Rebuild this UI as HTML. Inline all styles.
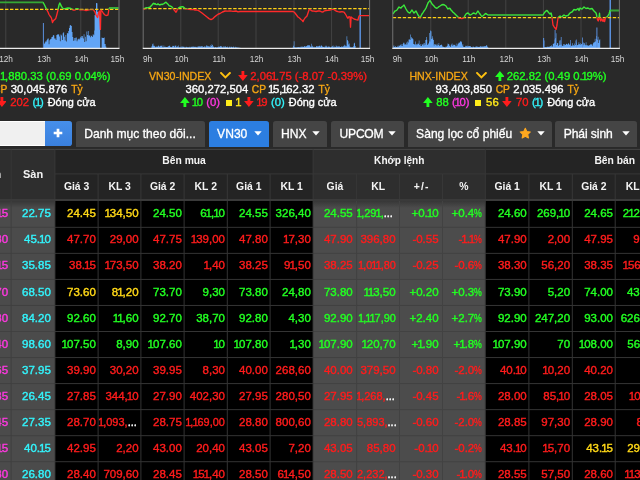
<!DOCTYPE html>
<html><head><meta charset="utf-8"><title>Bang gia</title>
<style>
*{box-sizing:border-box;margin:0;padding:0}
html,body{width:640px;height:480px;overflow:hidden;background:#292929;font-family:"Liberation Sans",sans-serif;color:#fff}
#root{position:relative;width:640px;height:480px;overflow:hidden;background:#292929}
#lay{position:absolute;left:0;top:0;width:640px;height:480px;will-change:transform}
.ax{position:absolute;top:53px;width:30px;text-align:center;font-size:8.3px;line-height:12px;color:#d6d6d6;letter-spacing:-0.1px}
.ix{position:absolute;top:68.6px;width:300px;text-align:center;font-size:11.3px;white-space:nowrap;color:#fff;-webkit-text-stroke:0.35px currentColor}
.ix .nm{font-size:10.6px;-webkit-text-stroke:0.3px currentColor}
.ix .lb{font-size:10.2px;color:#f7a714}
.ix .l1{height:14px;line-height:14px}
.ix .l2{height:13.6px;line-height:13.6px;margin-top:0.6px}
.ix .l3{height:13.6px;line-height:13.6px;margin-top:-0.4px}
.ix span{-webkit-text-stroke:0.35px currentColor}
.ar{display:inline-block;vertical-align:-1px;margin:0}
.chv{display:inline-block;vertical-align:0.9px;margin:0 7.4px 0 8.6px}
.sq{display:inline-block;width:6px;height:6px;background:#ffee1a;vertical-align:0.2px;margin:0 5px 0 5.5px}
.inp{position:absolute;left:-10px;top:120.6px;width:54.8px;height:25.4px;background:#f0f0f0;border-top:1px solid #fff;border-bottom:1px solid #fff}
.plus{position:absolute;left:44.8px;top:120.6px;width:26.8px;height:25.4px;background:linear-gradient(#468fea,#3a80de);border-radius:0 2.8px 2.8px 0}
.plus svg{position:absolute;left:8.6px;top:7.2px}
.bt{position:absolute;top:120.8px;height:26.6px;background:#454545;border-radius:2.8px 2.8px 0 0;font-size:12.1px;line-height:25px;color:#fff;white-space:nowrap;-webkit-text-stroke:0.3px #fff}
.bt.bl{background:#2c7ee1}
.bt span{position:absolute;top:1px}
.bt i,.bt b{position:absolute;top:0;height:25px;font-style:normal}
.bt i svg{position:absolute;top:10.2px;left:0}
.bt b svg{position:absolute;top:6.2px;left:0}
#thead{position:absolute;left:0;top:149px;width:640px;height:52px;background:#2e2e2e}
.h{position:absolute;text-align:center;font-weight:bold;color:#f4f4f4;white-space:nowrap}
.h span{top:0px}
.h.r2 span{top:-0.1px}
.c{position:absolute;font-size:11.5px;line-height:26px;white-space:nowrap;overflow:hidden;-webkit-text-stroke:0.4px currentColor}
.c span{position:absolute;top:0px}
.c b{font-weight:normal;margin:0 -1px}
.ix b{font-weight:normal;margin:0 -1.3px}
.h u{text-decoration:none;letter-spacing:1.1px;margin-left:1px}
.bg{position:absolute;top:200.8px;height:280px}
.c i{font-style:normal;color:#fff}
.c s{text-decoration:none;display:inline-block;transform:scaleX(.76);transform-origin:0 50%;margin-right:-2.4px}
</style></head><body><div id="root"><div id="lay">
<svg width="640" height="68" viewBox="0 0 640 68" style="position:absolute;left:0;top:0">
<line x1="5.8" y1="0" x2="5.8" y2="48.0" stroke="#4a4a4a" stroke-width="0.8"/>
<line x1="80.8" y1="0" x2="80.8" y2="48.0" stroke="#4a4a4a" stroke-width="0.8"/>
<path d="M43.80 48.0V43.9H44.50V42.7H45.20V41.6H45.90V41.6H46.60V40.0H47.30V38.7H48.00V38.6H48.70V44.2H49.40V40.2H50.10V39.2H50.80V38.7H51.50V37.1H52.20V36.7H52.90V35.1H53.60V35.6H54.30V38.6H55.00V38.4H55.70V40.1H56.40V35.0H57.10V34.4H57.80V34.3H58.50V34.5H59.20V36.5H59.90V41.2H60.60V34.6H61.30V35.6H62.00V40.1H62.70V33.3H63.40V32.2H64.10V36.7H64.80V40.5H65.50V35.0H66.20V41.5H66.90V33.0H67.60V33.6H68.30V31.0H69.00V28.1H69.70V25.5H70.40V24.9H71.10V26.0H71.80V32.0H72.50V37.0H73.20V40.7H73.90V38.1H74.60V40.4H75.30V37.8H76.00V37.6H76.70V41.3H77.40V39.5H78.10V38.8H78.80V39.5H79.50V38.4H80.20V37.3H80.90V36.1H81.60V37.8H82.30V35.9H83.00V38.6H83.70V34.3H84.40V42.0H85.10V36.7H85.80V41.3H86.50V31.6H87.20V35.0H87.90V31.1H88.60V35.6H89.30V35.4H90.00V37.2H90.70V35.4H91.40V35.9H92.10V37.1H92.80V34.2H93.50V35.3H94.20V30.6H94.60V15.0H95.30V14.0H96.00V3.0H96.70V3.2H97.40V12.0H98.10V13.0H98.80V14.0H99.50V16.0H100.20V48.0ZM101.60 48.0V37.5H102.30V38.0H103.90V37.5H104.60V44.0H105.60V46.5H106.30V48.0Z" fill="#62a5f6"/>
<rect x="42.9" y="23" width="1.0" height="25.0" fill="#5a8fdc"/>
<line x1="0" y1="9.4" x2="119.0" y2="9.4" stroke="#ffd015" stroke-width="1.25" stroke-dasharray="3.4 1.6"/>
<clipPath id="up1"><rect x="-10" y="-5" width="660" height="14.4"/></clipPath>
<clipPath id="dn1"><rect x="-10" y="9.4" width="660" height="60"/></clipPath>
<polyline points="-5.0,2.4 43.0,2.4 44.0,4.0 45.0,6.0 46.5,9.4 48.0,12.0 49.0,14.5 50.0,16.0 51.0,17.2 51.6,18.6 52.5,22.5 53.4,20.6 54.2,20.0 55.0,19.4 55.8,18.4 57.0,14.0 58.0,10.0 59.0,5.0 59.8,3.0 60.6,4.6 61.4,6.4 62.5,8.0 64.0,9.0 66.0,8.5 68.0,8.0 70.0,8.2 72.0,9.3 73.0,10.0 75.0,10.0 76.0,8.8 78.0,8.8 80.0,9.8 84.0,9.8 86.0,10.5 88.0,10.0 90.0,9.6 93.0,9.6 94.0,10.6 95.0,12.0 96.0,15.0 97.5,17.5 98.5,13.0 99.4,11.0 99.9,18.0 100.4,29.4 100.7,18.0 100.9,10.0 102.0,11.0 103.0,12.6 104.0,14.0 105.0,15.0 106.0,15.5 107.0,15.4 108.0,15.0 108.5,12.0 108.9,9.0 109.5,8.0 118.6,8.0" fill="none" stroke="#3be83b" stroke-width="1.4" stroke-linejoin="round" clip-path="url(#up1)"/>
<polyline points="-5.0,2.4 43.0,2.4 44.0,4.0 45.0,6.0 46.5,9.4 48.0,12.0 49.0,14.5 50.0,16.0 51.0,17.2 51.6,18.6 52.5,22.5 53.4,20.6 54.2,20.0 55.0,19.4 55.8,18.4 57.0,14.0 58.0,10.0 59.0,5.0 59.8,3.0 60.6,4.6 61.4,6.4 62.5,8.0 64.0,9.0 66.0,8.5 68.0,8.0 70.0,8.2 72.0,9.3 73.0,10.0 75.0,10.0 76.0,8.8 78.0,8.8 80.0,9.8 84.0,9.8 86.0,10.5 88.0,10.0 90.0,9.6 93.0,9.6 94.0,10.6 95.0,12.0 96.0,15.0 97.5,17.5 98.5,13.0 99.4,11.0 99.9,18.0 100.4,29.4 100.7,18.0 100.9,10.0 102.0,11.0 103.0,12.6 104.0,14.0 105.0,15.0 106.0,15.5 107.0,15.4 108.0,15.0 108.5,12.0 108.9,9.0 109.5,8.0 118.6,8.0" fill="none" stroke="#ff2a2a" stroke-width="1.35" stroke-linejoin="round" clip-path="url(#dn1)"/>
<line x1="-5" y1="2.4" x2="43" y2="2.4" stroke="#35a835" stroke-width="1.45"/>
<line x1="109" y1="8" x2="118.6" y2="8" stroke="#3fae3f" stroke-width="1.45"/>
<line x1="119.0" y1="0" x2="119.0" y2="48.0" stroke="#727272" stroke-width="1"/>
<line x1="-2" y1="48.3" x2="119.5" y2="48.3" stroke="#ececec" stroke-width="1.2"/>
<line x1="180.8" y1="0" x2="180.8" y2="48.0" stroke="#4a4a4a" stroke-width="0.8"/>
<line x1="218.2" y1="0" x2="218.2" y2="48.0" stroke="#4a4a4a" stroke-width="0.8"/>
<line x1="256" y1="0" x2="256" y2="48.0" stroke="#4a4a4a" stroke-width="0.8"/>
<line x1="294" y1="0" x2="294" y2="48.0" stroke="#4a4a4a" stroke-width="0.8"/>
<line x1="331.6" y1="0" x2="331.6" y2="48.0" stroke="#4a4a4a" stroke-width="0.8"/>
<path d="M151.00 48.0V47.7H151.60V46.1H152.20V44.3H152.80V43.4H153.40V45.8H154.00V45.7H154.60V46.3H155.20V47.2H155.80V46.7H156.40V46.6H157.00V47.0H157.60V45.9H158.20V45.6H158.80V46.2H159.40V46.7H160.00V45.8H160.60V46.3H161.20V45.8H161.80V45.5H162.40V47.3H163.00V47.2H163.60V45.4H164.20V47.1H164.80V46.6H165.40V47.1H166.00V47.0H166.60V47.1H167.20V47.1H167.80V46.2H168.40V46.2H169.00V45.7H169.60V45.7H170.20V47.1H170.80V47.1H171.40V47.3H172.00V46.4H172.60V45.8H173.20V46.1H173.80V45.8H174.40V47.2H175.00V45.8H175.60V45.5H176.20V47.3H176.80V46.4H177.40V46.6H178.00V45.6H178.60V47.2H179.20V47.2H179.80V47.4H180.40V46.8H181.00V46.6H181.60V47.4H182.20V46.5H182.80V46.7H183.40V46.8H184.00V47.4H184.60V46.7H185.20V47.4H185.80V47.2H186.40V46.8H187.00V47.3H187.60V47.2H188.20V47.2H188.80V47.4H189.40V46.8H190.00V47.5H190.60V46.8H191.20V47.0H191.80V46.3H192.40V46.9H193.00V46.8H193.60V46.4H194.20V47.1H194.80V46.5H195.40V46.9H196.00V47.3H196.60V46.7H197.20V47.3H197.80V46.1H198.40V46.8H199.00V45.9H199.60V47.0H200.20V46.4H200.80V46.0H201.40V46.4H202.00V46.0H202.60V47.3H203.20V46.9H203.80V46.6H204.40V46.4H205.00V47.3H205.60V46.2H206.20V45.3H206.80V46.6H207.40V45.7H208.00V46.4H208.60V46.0H209.20V46.4H209.80V47.1H210.40V45.3H211.00V46.0H211.60V44.2H212.20V45.1H212.80V46.7H213.40V46.5H214.00V47.4H214.60V47.3H215.20V46.9H215.80V47.3H216.40V47.4H217.00V47.2H217.60V47.3H218.20V46.6H218.80V46.9H219.40V46.5H220.00V45.9H220.60V46.6H221.20V46.2H221.80V46.7H222.40V47.4H223.00V47.2H223.60V45.9H224.20V47.3H224.80V46.6H225.40V46.6H226.00V47.2H226.60V46.9H227.20V46.4H227.80V47.4H228.40V47.4H229.00V46.4H229.60V47.2H230.20V47.5H230.80V46.5H231.40V47.1H232.00V47.5H232.60V47.0H233.20V46.5H233.80V47.6H234.40V47.5H235.00V46.7H235.60V47.6H236.20V47.2H236.80V47.6H237.40V47.6H238.00V47.5H238.60V47.7H239.20V47.8H239.80V47.8H240.40V48.0ZM292.60 48.0V47.5H293.20V45.8H293.80V41.3H294.40V47.3H295.00V47.4H295.60V47.2H296.20V47.4H296.80V47.3H297.40V47.2H298.00V47.2H298.60V47.0H299.20V47.2H299.80V47.4H300.40V46.7H301.00V46.6H301.60V47.2H302.20V46.6H302.80V47.1H303.40V46.7H304.00V46.1H304.60V46.6H305.20V46.8H305.80V45.9H306.40V46.2H307.00V45.1H307.60V45.9H308.20V45.1H308.80V45.6H309.40V45.2H310.00V46.6H310.60V46.8H311.20V43.7H311.80V46.8H312.40V45.7H313.00V46.7H313.60V47.5H314.20V46.8H314.80V47.4H315.40V46.9H316.00V46.0H316.60V46.5H317.20V46.6H317.80V45.9H318.40V46.4H319.00V46.0H319.60V45.5H320.20V46.8H320.80V45.9H321.40V45.2H322.00V46.3H322.60V46.9H323.20V46.9H323.80V46.4H324.40V47.3H325.00V45.7H325.60V47.1H326.20V45.8H326.80V46.6H327.40V47.3H328.00V46.2H328.60V47.0H329.20V46.5H329.80V47.0H330.40V47.4H331.00V46.7H331.60V46.7H332.20V46.2H332.80V45.6H333.40V47.2H334.00V46.6H334.60V47.2H335.20V47.0H335.80V45.6H336.40V46.4H337.00V46.7H337.60V46.2H338.20V46.6H338.80V46.6H339.40V46.6H340.00V47.0H340.60V46.9H341.20V46.4H341.80V46.2H342.40V47.0H343.00V46.4H343.60V45.7H344.20V44.8H344.80V46.6H345.40V45.6H346.00V46.2H346.60V36.3H347.20V39.9H347.80V41.3H348.40V44.4H349.00V43.6H349.60V46.6H350.20V47.2H350.80V47.5H351.40V47.3H352.00V47.1H352.60V47.7H353.20V46.2H353.80V43.5H354.40V42.8H355.00V46.1H355.60V48.0Z" fill="#62a5f6"/>
<rect x="359.45" y="8.7" width="1.5" height="39.3" fill="#5a8fdc"/>
<line x1="143.2" y1="8.7" x2="369.6" y2="8.7" stroke="#ffd015" stroke-width="1.25" stroke-dasharray="3.4 1.6"/>
<clipPath id="up2"><rect x="-10" y="-5" width="660" height="13.7"/></clipPath>
<clipPath id="dn2"><rect x="-10" y="8.7" width="660" height="60"/></clipPath>
<polyline points="143.4,9.8 144.2,9.2 145.0,8.2 146.5,7.6 148.0,8.0 149.0,7.2 150.0,7.4 151.0,6.0 152.0,5.0 153.0,3.8 153.6,3.2 154.4,4.0 155.0,3.4 156.0,4.4 157.0,4.6 158.0,3.8 158.6,4.4 160.0,5.0 161.0,4.2 162.0,4.6 163.0,4.0 164.0,3.6 165.0,2.8 166.0,2.2 167.0,3.4 168.0,4.2 169.0,5.6 170.0,6.0 171.0,6.4 172.0,7.0 173.0,8.4 173.8,9.6 175.0,11.0 176.0,12.2 176.8,10.8 177.4,9.2 178.2,8.4 179.0,7.6 180.0,7.0 181.0,7.2 182.0,6.6 183.0,6.8 184.0,7.6 185.0,8.6 186.5,8.9 188.0,9.0 190.5,9.6 193.0,9.4 195.0,10.0 197.0,10.0 199.5,11.2 202.0,13.0 204.5,15.0 207.0,17.0 209.0,18.6 211.0,19.6 213.0,18.6 215.0,16.6 217.0,15.0 218.5,14.0 220.0,13.5 222.5,12.0 225.0,11.0 227.5,11.2 230.0,10.8 233.0,11.3 236.0,11.0 238.0,11.8 240.0,11.5 293.0,11.5 294.0,12.0 295.0,13.0 296.5,15.0 298.0,17.0 299.5,18.0 301.0,19.5 302.0,20.2 303.0,21.6 304.0,19.5 305.0,18.0 306.0,17.0 307.0,16.0 308.0,13.0 309.0,10.0 310.0,9.0 311.0,10.4 312.0,11.0 314.0,11.2 316.0,11.5 318.0,11.0 320.0,11.0 321.5,11.8 323.0,12.0 324.5,10.8 326.0,10.5 328.0,10.4 330.0,10.0 331.5,9.6 333.0,9.0 334.5,10.0 336.0,11.0 338.0,11.6 340.0,12.0 342.0,11.7 344.0,12.2 345.0,13.5 346.0,15.0 347.0,17.0 348.0,18.2 349.0,16.5 350.0,17.0 350.5,27.2 351.1,17.0 352.5,18.0 354.0,19.0 356.0,19.6 358.0,20.0 358.7,17.0 359.4,15.6 369.0,15.6" fill="none" stroke="#3be83b" stroke-width="1.4" stroke-linejoin="round" clip-path="url(#up2)"/>
<polyline points="143.4,9.8 144.2,9.2 145.0,8.2 146.5,7.6 148.0,8.0 149.0,7.2 150.0,7.4 151.0,6.0 152.0,5.0 153.0,3.8 153.6,3.2 154.4,4.0 155.0,3.4 156.0,4.4 157.0,4.6 158.0,3.8 158.6,4.4 160.0,5.0 161.0,4.2 162.0,4.6 163.0,4.0 164.0,3.6 165.0,2.8 166.0,2.2 167.0,3.4 168.0,4.2 169.0,5.6 170.0,6.0 171.0,6.4 172.0,7.0 173.0,8.4 173.8,9.6 175.0,11.0 176.0,12.2 176.8,10.8 177.4,9.2 178.2,8.4 179.0,7.6 180.0,7.0 181.0,7.2 182.0,6.6 183.0,6.8 184.0,7.6 185.0,8.6 186.5,8.9 188.0,9.0 190.5,9.6 193.0,9.4 195.0,10.0 197.0,10.0 199.5,11.2 202.0,13.0 204.5,15.0 207.0,17.0 209.0,18.6 211.0,19.6 213.0,18.6 215.0,16.6 217.0,15.0 218.5,14.0 220.0,13.5 222.5,12.0 225.0,11.0 227.5,11.2 230.0,10.8 233.0,11.3 236.0,11.0 238.0,11.8 240.0,11.5 293.0,11.5 294.0,12.0 295.0,13.0 296.5,15.0 298.0,17.0 299.5,18.0 301.0,19.5 302.0,20.2 303.0,21.6 304.0,19.5 305.0,18.0 306.0,17.0 307.0,16.0 308.0,13.0 309.0,10.0 310.0,9.0 311.0,10.4 312.0,11.0 314.0,11.2 316.0,11.5 318.0,11.0 320.0,11.0 321.5,11.8 323.0,12.0 324.5,10.8 326.0,10.5 328.0,10.4 330.0,10.0 331.5,9.6 333.0,9.0 334.5,10.0 336.0,11.0 338.0,11.6 340.0,12.0 342.0,11.7 344.0,12.2 345.0,13.5 346.0,15.0 347.0,17.0 348.0,18.2 349.0,16.5 350.0,17.0 350.5,27.2 351.1,17.0 352.5,18.0 354.0,19.0 356.0,19.6 358.0,20.0 358.7,17.0 359.4,15.6 369.0,15.6" fill="none" stroke="#ff2a2a" stroke-width="1.35" stroke-linejoin="round" clip-path="url(#dn2)"/>
<line x1="143.2" y1="0" x2="143.2" y2="48.0" stroke="#727272" stroke-width="1"/>
<line x1="369.6" y1="0" x2="369.6" y2="48.0" stroke="#727272" stroke-width="1"/>
<line x1="142.7" y1="48.3" x2="370.1" y2="48.3" stroke="#ececec" stroke-width="1.2"/>
<line x1="430.8" y1="0" x2="430.8" y2="48.0" stroke="#4a4a4a" stroke-width="0.8"/>
<line x1="468.2" y1="0" x2="468.2" y2="48.0" stroke="#4a4a4a" stroke-width="0.8"/>
<line x1="505.8" y1="0" x2="505.8" y2="48.0" stroke="#4a4a4a" stroke-width="0.8"/>
<line x1="543.4" y1="0" x2="543.4" y2="48.0" stroke="#4a4a4a" stroke-width="0.8"/>
<line x1="581" y1="0" x2="581" y2="48.0" stroke="#4a4a4a" stroke-width="0.8"/>
<path d="M393.00 48.0V46.6H393.60V45.3H394.20V46.9H394.80V47.1H395.40V46.0H396.00V46.9H396.60V47.0H397.20V46.5H397.80V45.5H398.40V46.7H399.00V45.5H399.60V45.9H400.20V45.1H400.80V43.9H401.40V45.8H402.00V45.9H402.60V44.0H403.20V42.8H403.80V42.8H404.40V44.6H405.00V44.0H405.60V45.1H406.20V42.6H406.80V44.6H407.40V41.4H408.00V42.5H408.60V39.6H409.20V39.2H409.80V40.1H410.40V34.6H411.00V37.0H411.60V38.6H412.20V38.3H412.80V39.2H413.40V44.1H414.00V44.5H414.60V44.3H415.20V41.6H415.80V45.3H416.40V44.0H417.00V44.6H417.60V43.4H418.20V43.7H418.80V40.6H419.40V44.9H420.00V44.3H420.60V46.1H421.20V46.0H421.80V43.9H422.40V44.7H423.00V43.5H423.60V45.5H424.20V43.1H424.80V44.8H425.40V39.9H426.00V37.0H426.60V39.7H427.20V45.0H427.80V44.2H428.40V43.2H429.00V33.0H429.60V41.5H430.20V30.6H430.80V31.3H431.40V38.9H432.00V36.3H432.60V38.5H433.20V39.9H433.80V45.6H434.40V44.1H435.00V44.4H435.60V44.6H436.20V45.5H436.80V43.8H437.40V45.4H438.00V45.0H438.60V42.9H439.20V46.1H439.80V45.2H440.40V45.1H441.00V44.6H441.60V44.9H442.20V46.5H442.80V46.4H443.40V47.1H444.00V46.9H444.60V47.5H445.20V47.2H445.80V46.1H446.40V46.9H447.00V45.8H447.60V43.5H448.20V44.0H448.80V44.6H449.40V46.0H450.00V47.0H450.60V45.5H451.20V44.4H451.80V43.6H452.40V45.7H453.00V45.3H453.60V44.4H454.20V44.9H454.80V44.7H455.40V46.3H456.00V46.2H456.60V43.4H457.20V45.4H457.80V43.9H458.40V42.7H459.00V43.0H459.60V42.0H460.20V41.3H460.80V41.3H461.40V42.2H462.00V45.5H462.60V43.9H463.20V46.7H463.80V46.7H464.40V47.1H465.00V45.7H465.60V46.7H466.20V46.1H466.80V45.5H467.40V46.4H468.00V46.0H468.60V46.6H469.20V46.0H469.80V45.9H470.40V46.6H471.00V47.1H471.60V47.2H472.20V47.3H472.80V46.3H473.40V47.1H474.00V47.0H474.60V47.4H475.20V46.7H475.80V46.6H476.40V46.5H477.00V46.5H477.60V47.1H478.20V47.0H478.80V46.6H479.40V47.0H480.00V46.0H480.60V46.8H481.20V46.6H481.80V46.5H482.40V46.6H483.00V46.8H483.60V46.0H484.20V46.3H484.80V46.5H485.40V46.0H486.00V45.2H486.60V45.5H487.20V46.7H487.80V47.4H488.40V48.0ZM542.60 48.0V47.9H543.20V44.0H543.80V40.5H544.40V47.2H545.00V47.2H545.60V47.0H546.20V47.2H546.80V46.8H547.40V46.8H548.00V47.1H548.60V46.6H549.20V46.7H549.80V46.6H550.40V46.0H551.00V45.3H551.60V46.5H552.20V46.6H552.80V44.1H553.40V43.6H554.00V43.2H554.60V39.5H555.20V38.1H555.80V33.3H556.40V44.9H557.00V43.1H557.60V43.3H558.20V46.1H558.80V44.9H559.40V40.4H560.00V40.3H560.60V44.8H561.20V44.5H561.80V45.4H562.40V45.9H563.00V44.0H563.60V45.7H564.20V44.3H564.80V44.5H565.40V45.1H566.00V43.7H566.60V44.1H567.20V44.8H567.80V43.9H568.40V43.0H569.00V44.5H569.60V44.8H570.20V43.6H570.80V45.8H571.40V45.7H572.00V43.3H572.60V45.7H573.20V45.0H573.80V45.7H574.40V43.6H575.00V45.0H575.60V40.5H576.20V42.6H576.80V45.3H577.40V45.1H578.00V44.5H578.60V42.2H579.20V44.1H579.80V45.1H580.40V43.2H581.00V44.1H581.60V44.2H582.20V42.9H582.80V45.3H583.40V42.6H584.00V43.1H584.60V44.4H585.20V45.2H585.80V42.2H586.40V45.3H587.00V45.3H587.60V45.6H588.20V45.7H588.80V45.4H589.40V45.1H590.00V44.4H590.60V44.3H591.20V44.5H591.80V44.3H592.40V45.7H593.00V43.3H593.60V42.2H594.20V42.2H594.80V38.8H595.40V41.6H596.00V36.1H596.60V39.0H597.20V39.9H597.80V36.8H598.40V42.9H599.00V40.3H599.60V39.3H600.20V48.0Z" fill="#62a5f6"/>
<rect x="609.5" y="0" width="1.5" height="48.0" fill="#5a8fdc"/>
<rect x="554.65" y="30" width="0.9" height="18.0" fill="#5a8fdc"/>
<rect x="596.4" y="27.5" width="1.0" height="20.5" fill="#5a8fdc"/>
<rect x="543.0500000000001" y="38" width="1.1" height="10.0" fill="#5a8fdc"/>
<rect x="560.8000000000001" y="37" width="0.8" height="11.0" fill="#5a8fdc"/>
<rect x="582.2" y="37.5" width="0.8" height="10.5" fill="#5a8fdc"/>
<rect x="570.05" y="40" width="0.7" height="8.0" fill="#5a8fdc"/>
<rect x="575.9499999999999" y="39.5" width="0.7" height="8.5" fill="#5a8fdc"/>
<line x1="392.75" y1="17.6" x2="619.4" y2="17.6" stroke="#ffd015" stroke-width="1.25" stroke-dasharray="3.4 1.6"/>
<clipPath id="up3"><rect x="-10" y="-5" width="660" height="22.6"/></clipPath>
<clipPath id="dn3"><rect x="-10" y="17.6" width="660" height="60"/></clipPath>
<polyline points="393.0,14.0 394.0,12.4 395.0,11.0 396.0,10.6 397.0,10.0 398.0,8.4 399.0,7.0 400.0,7.8 401.0,8.0 402.0,6.8 403.0,6.0 404.0,5.0 405.0,7.0 406.0,9.0 407.0,10.6 408.0,12.0 409.0,12.8 410.0,13.0 411.0,11.4 412.0,10.0 413.0,11.6 414.0,13.0 415.0,12.0 416.0,11.0 417.0,13.0 418.0,15.0 419.0,16.4 420.0,18.0 421.0,16.0 422.0,14.0 423.0,12.6 424.0,11.0 425.0,9.6 426.0,8.0 427.0,5.4 428.0,3.0 429.0,1.6 430.0,0.5 431.0,2.2 432.0,4.0 433.0,5.0 434.0,6.0 435.0,7.2 436.0,8.0 437.0,8.2 438.0,7.5 439.0,6.6 440.0,6.0 441.5,5.0 443.0,4.5 444.5,5.0 446.0,6.0 447.0,7.6 448.0,9.0 449.0,8.3 450.0,8.5 451.0,10.0 452.0,11.0 453.0,12.2 454.0,13.0 455.0,14.0 456.0,15.0 457.0,16.0 458.0,17.0 459.0,18.0 460.5,18.4 462.0,18.6 463.0,18.2 464.0,17.5 465.0,15.6 466.0,14.0 467.0,13.2 468.0,13.0 469.0,14.0 470.0,15.0 471.0,14.6 472.0,14.0 473.0,13.2 474.0,13.0 475.0,13.6 476.0,14.0 477.0,12.4 478.0,11.0 479.0,12.6 480.0,14.0 481.0,15.4 482.0,16.5 483.0,15.8 484.0,15.0 485.0,14.0 486.0,13.5 487.0,14.4 488.0,15.0 543.0,15.0 544.0,13.4 545.0,12.0 546.0,11.0 547.0,10.5 548.0,11.8 549.0,13.0 550.0,14.0 551.0,13.0 551.6,15.0 552.0,17.6 552.5,21.0 553.0,25.0 554.0,26.6 555.0,28.0 556.0,29.5 556.6,27.0 557.0,25.0 557.5,21.0 558.0,18.0 559.0,16.8 560.0,16.0 561.0,16.6 562.0,17.0 563.0,15.8 564.0,15.0 565.0,15.6 566.0,16.0 567.0,15.6 568.0,15.5 569.0,14.2 570.0,13.0 571.0,12.4 572.0,12.0 573.0,10.8 574.0,9.5 575.0,9.8 576.0,10.0 577.0,9.2 578.0,8.5 579.0,10.5 580.0,8.0 581.0,8.6 582.0,9.0 583.0,8.0 584.0,7.0 585.0,7.8 586.0,8.5 587.0,8.2 588.0,8.0 589.0,8.6 590.0,9.0 591.0,8.7 592.0,8.5 593.0,9.8 594.0,11.0 595.0,12.0 596.0,13.0 596.6,15.0 597.0,17.6 597.6,20.0 598.2,21.0 599.0,18.6 599.5,13.2 600.0,18.6 600.8,21.0 601.8,18.8 603.0,21.4 604.0,19.0 604.6,21.6 605.4,18.2 606.0,17.4 607.0,17.0 608.0,15.6 609.0,14.0 609.6,12.0 610.0,10.5 619.0,10.5" fill="none" stroke="#3be83b" stroke-width="1.4" stroke-linejoin="round" clip-path="url(#up3)"/>
<polyline points="393.0,14.0 394.0,12.4 395.0,11.0 396.0,10.6 397.0,10.0 398.0,8.4 399.0,7.0 400.0,7.8 401.0,8.0 402.0,6.8 403.0,6.0 404.0,5.0 405.0,7.0 406.0,9.0 407.0,10.6 408.0,12.0 409.0,12.8 410.0,13.0 411.0,11.4 412.0,10.0 413.0,11.6 414.0,13.0 415.0,12.0 416.0,11.0 417.0,13.0 418.0,15.0 419.0,16.4 420.0,18.0 421.0,16.0 422.0,14.0 423.0,12.6 424.0,11.0 425.0,9.6 426.0,8.0 427.0,5.4 428.0,3.0 429.0,1.6 430.0,0.5 431.0,2.2 432.0,4.0 433.0,5.0 434.0,6.0 435.0,7.2 436.0,8.0 437.0,8.2 438.0,7.5 439.0,6.6 440.0,6.0 441.5,5.0 443.0,4.5 444.5,5.0 446.0,6.0 447.0,7.6 448.0,9.0 449.0,8.3 450.0,8.5 451.0,10.0 452.0,11.0 453.0,12.2 454.0,13.0 455.0,14.0 456.0,15.0 457.0,16.0 458.0,17.0 459.0,18.0 460.5,18.4 462.0,18.6 463.0,18.2 464.0,17.5 465.0,15.6 466.0,14.0 467.0,13.2 468.0,13.0 469.0,14.0 470.0,15.0 471.0,14.6 472.0,14.0 473.0,13.2 474.0,13.0 475.0,13.6 476.0,14.0 477.0,12.4 478.0,11.0 479.0,12.6 480.0,14.0 481.0,15.4 482.0,16.5 483.0,15.8 484.0,15.0 485.0,14.0 486.0,13.5 487.0,14.4 488.0,15.0 543.0,15.0 544.0,13.4 545.0,12.0 546.0,11.0 547.0,10.5 548.0,11.8 549.0,13.0 550.0,14.0 551.0,13.0 551.6,15.0 552.0,17.6 552.5,21.0 553.0,25.0 554.0,26.6 555.0,28.0 556.0,29.5 556.6,27.0 557.0,25.0 557.5,21.0 558.0,18.0 559.0,16.8 560.0,16.0 561.0,16.6 562.0,17.0 563.0,15.8 564.0,15.0 565.0,15.6 566.0,16.0 567.0,15.6 568.0,15.5 569.0,14.2 570.0,13.0 571.0,12.4 572.0,12.0 573.0,10.8 574.0,9.5 575.0,9.8 576.0,10.0 577.0,9.2 578.0,8.5 579.0,10.5 580.0,8.0 581.0,8.6 582.0,9.0 583.0,8.0 584.0,7.0 585.0,7.8 586.0,8.5 587.0,8.2 588.0,8.0 589.0,8.6 590.0,9.0 591.0,8.7 592.0,8.5 593.0,9.8 594.0,11.0 595.0,12.0 596.0,13.0 596.6,15.0 597.0,17.6 597.6,20.0 598.2,21.0 599.0,18.6 599.5,13.2 600.0,18.6 600.8,21.0 601.8,18.8 603.0,21.4 604.0,19.0 604.6,21.6 605.4,18.2 606.0,17.4 607.0,17.0 608.0,15.6 609.0,14.0 609.6,12.0 610.0,10.5 619.0,10.5" fill="none" stroke="#ff2a2a" stroke-width="1.35" stroke-linejoin="round" clip-path="url(#dn3)"/>
<line x1="488" y1="15" x2="543" y2="15" stroke="#3aa53a" stroke-width="1.45"/>
<line x1="610.6" y1="10.5" x2="619" y2="10.5" stroke="#36a036" stroke-width="1.45"/>
<line x1="392.75" y1="0" x2="392.75" y2="48.0" stroke="#727272" stroke-width="1"/>
<line x1="619.4" y1="0" x2="619.4" y2="48.0" stroke="#727272" stroke-width="1"/>
<line x1="392.25" y1="48.3" x2="619.9" y2="48.3" stroke="#ececec" stroke-width="1.2"/>
</svg>
<div class="ax" style="left:-9px">12h</div>
<div class="ax" style="left:29px">13h</div>
<div class="ax" style="left:66.4px">14h</div>
<div class="ax" style="left:102.4px">15h</div>
<div class="ax" style="left:132.4px">9h</div>
<div class="ax" style="left:166.4px">10h</div>
<div class="ax" style="left:204px">11h</div>
<div class="ax" style="left:241.60000000000002px">12h</div>
<div class="ax" style="left:279.2px">13h</div>
<div class="ax" style="left:316.8px">14h</div>
<div class="ax" style="left:352.6px">15h</div>
<div class="ax" style="left:382.2px">9h</div>
<div class="ax" style="left:416.2px">10h</div>
<div class="ax" style="left:453.8px">11h</div>
<div class="ax" style="left:491.4px">12h</div>
<div class="ax" style="left:529px">13h</div>
<div class="ax" style="left:566.4px">14h</div>
<div class="ax" style="left:602.6px">15h</div>
<div class="ix" style="left:-142px">
<div class="l1" style="position:relative;left:3.2px"><span class="nm" style="color:#f7a714">VN-INDEX</span><svg class="chv" width="10.8" height="6.6" viewBox="0 0 10.8 6.6"><path d="M1 1 L5.4 5.4 L9.8 1" fill="none" stroke="#fdc010" stroke-width="1.9" stroke-linecap="square" stroke-linejoin="miter"/></svg><svg class="ar" width="9.8" height="10" viewBox="0 0 10 10"><path d="M3.55 10 H6.45 V5.9 H9.9 L5 0 L0.1 5.9 H3.55 Z" fill="#22ff22"/></svg><span style="color:#22ff22;margin-left:2.4px"><b>1</b>,880.33 (0.69 0.04%)</span></div>
<div class="l2" style="position:relative;left:-2px"><span style="margin-left:0px">96<b>1</b>,538,274</span><span class="lb" style="margin-left:3.6px">CP</span><span style="margin-left:3.4px">30,045.876</span><span class="lb" style="margin-left:4px">Tỷ</span></div>
<div class="l3" style="position:relative;left:-0.5px"><span style="margin-left:0.6px"></span><svg class="ar" width="9.8" height="10" viewBox="0 0 10 10"><path d="M3.55 10 H6.45 V5.9 H9.9 L5 0 L0.1 5.9 H3.55 Z" fill="#22ff22"/></svg><span style="color:#22ff22;margin-left:3.3px"><b>1</b>48</span><span style="color:#ff38e0;margin-left:3.3px">(4)</span><span class="sq"></span><span style="color:#ffe81a">5<b>1</b></span><span style="margin-left:3.6px"></span><svg class="ar" width="9.8" height="10" viewBox="0 0 10 10"><path d="M3.55 0 H6.45 V4.1 H9.9 L5 10 L0.1 4.1 H3.55 Z" fill="#ff1c1c"/></svg><span style="color:#ff1c1c;margin-left:3.8px">202</span><span style="color:#33f4fc;margin-left:3.5px">(<b>1</b>)</span><span style="margin-left:4px;font-size:10.9px">Đóng cửa</span></div>
</div><div class="ix" style="left:108px">
<div class="l1" style="position:relative;left:0px"><span class="nm" style="color:#f7a714">VN30-INDEX</span><svg class="chv" width="10.8" height="6.6" viewBox="0 0 10.8 6.6"><path d="M1 1 L5.4 5.4 L9.8 1" fill="none" stroke="#fdc010" stroke-width="1.9" stroke-linecap="square" stroke-linejoin="miter"/></svg><svg class="ar" width="9.8" height="10" viewBox="0 0 10 10"><path d="M3.55 0 H6.45 V4.1 H9.9 L5 10 L0.1 4.1 H3.55 Z" fill="#ff1c1c"/></svg><span style="color:#ff1c1c;margin-left:2.4px">2,06<b>1</b>.75 (-8.07 -0.39%)</span></div>
<div class="l2" style="position:relative;left:-0.4px"><span style="margin-left:0px">360,272,504</span><span class="lb" style="margin-left:3.6px">CP</span><span style="margin-left:3.4px"><b>1</b>5,<b>1</b>62.32</span><span class="lb" style="margin-left:4px">Tỷ</span></div>
<div class="l3" style="position:relative;left:0px"><span style="margin-left:0.6px"></span><svg class="ar" width="9.8" height="10" viewBox="0 0 10 10"><path d="M3.55 10 H6.45 V5.9 H9.9 L5 0 L0.1 5.9 H3.55 Z" fill="#22ff22"/></svg><span style="color:#22ff22;margin-left:3.3px"><b>1</b>0</span><span style="color:#ff38e0;margin-left:3.3px">(0)</span><span class="sq"></span><span style="color:#ffe81a"><b>1</b></span><span style="margin-left:3.6px"></span><svg class="ar" width="9.8" height="10" viewBox="0 0 10 10"><path d="M3.55 0 H6.45 V4.1 H9.9 L5 10 L0.1 4.1 H3.55 Z" fill="#ff1c1c"/></svg><span style="color:#ff1c1c;margin-left:3.8px"><b>1</b>9</span><span style="color:#33f4fc;margin-left:3.5px">(0)</span><span style="margin-left:4px;font-size:10.9px">Đóng cửa</span></div>
</div><div class="ix" style="left:358px">
<div class="l1" style="position:relative;left:0px"><span class="nm" style="color:#f7a714">HNX-INDEX</span><svg class="chv" width="10.8" height="6.6" viewBox="0 0 10.8 6.6"><path d="M1 1 L5.4 5.4 L9.8 1" fill="none" stroke="#fdc010" stroke-width="1.9" stroke-linecap="square" stroke-linejoin="miter"/></svg><svg class="ar" width="9.8" height="10" viewBox="0 0 10 10"><path d="M3.55 10 H6.45 V5.9 H9.9 L5 0 L0.1 5.9 H3.55 Z" fill="#22ff22"/></svg><span style="color:#22ff22;margin-left:2.4px">262.82 (0.49 0.<b>1</b>9%)</span></div>
<div class="l2" style="position:relative;left:-0.8px"><span style="margin-left:0px">93,403,850</span><span class="lb" style="margin-left:3.6px">CP</span><span style="margin-left:3.4px">2,035.496</span><span class="lb" style="margin-left:4px">Tỷ</span></div>
<div class="l3" style="position:relative;left:0.8px"><span style="margin-left:0.6px"></span><svg class="ar" width="9.8" height="10" viewBox="0 0 10 10"><path d="M3.55 10 H6.45 V5.9 H9.9 L5 0 L0.1 5.9 H3.55 Z" fill="#22ff22"/></svg><span style="color:#22ff22;margin-left:3.3px">88</span><span style="color:#ff38e0;margin-left:3.3px">(<b>1</b>0)</span><span class="sq"></span><span style="color:#ffe81a">56</span><span style="margin-left:3.6px"></span><svg class="ar" width="9.8" height="10" viewBox="0 0 10 10"><path d="M3.55 0 H6.45 V4.1 H9.9 L5 10 L0.1 4.1 H3.55 Z" fill="#ff1c1c"/></svg><span style="color:#ff1c1c;margin-left:3.8px">70</span><span style="color:#33f4fc;margin-left:3.5px">(<b>1</b>)</span><span style="margin-left:4px;font-size:10.9px">Đóng cửa</span></div>
</div>
<div class="inp"></div>
<div class="plus"><svg width="10" height="10" viewBox="0 0 10 10"><path d="M5 0.7 V9.3 M0.7 5 H9.3" stroke="#fff" stroke-width="2.7" stroke-linecap="butt"/></svg></div>
<div class="bt" style="left:76px;width:129px"><span style="left:8.2px">Danh mục theo dõi...</span></div>
<div class="bt bl" style="left:208.5px;width:60.0px"><span style="left:8.6px">VN30</span><i style="left:45.8px"><svg class="cr" width="8" height="5" viewBox="0 0 8 5"><path d="M0.3 0.3 L7.7 0.3 L4 4.6 Z" fill="#fff"/></svg></i></div>
<div class="bt" style="left:272.5px;width:54.5px"><span style="left:8.6px">HNX</span><i style="left:39.2px"><svg class="cr" width="8" height="5" viewBox="0 0 8 5"><path d="M0.3 0.3 L7.7 0.3 L4 4.6 Z" fill="#fff"/></svg></i></div>
<div class="bt" style="left:331.2px;width:72.60000000000002px"><span style="left:8.4px;letter-spacing:-0.25px">UPCOM</span><i style="left:57px"><svg class="cr" width="8" height="5" viewBox="0 0 8 5"><path d="M0.3 0.3 L7.7 0.3 L4 4.6 Z" fill="#fff"/></svg></i></div>
<div class="bt" style="left:407.5px;width:144.5px"><span style="left:8.6px">Sàng lọc cổ phiếu</span><b style="left:111.4px"><svg class="st" width="12.6" height="12.6" viewBox="0 0 24 24"><path d="M12.00 2.40 L14.88 8.64 L21.70 9.45 L16.66 14.11 L18.00 20.85 L12.00 17.50 L6.00 20.85 L7.34 14.11 L2.30 9.45 L9.12 8.64 Z" fill="#ffa81f" stroke="#ffa81f" stroke-width="2" stroke-linejoin="round"/></svg></b><i style="left:129.6px"><svg class="cr" width="8" height="5" viewBox="0 0 8 5"><path d="M0.3 0.3 L7.7 0.3 L4 4.6 Z" fill="#fff"/></svg></i></div>
<div class="bt" style="left:555.4px;width:81.80000000000007px"><span style="left:8.4px;letter-spacing:-0.1px">Phái sinh</span><i style="left:66.2px"><svg class="cr" width="8" height="5" viewBox="0 0 8 5"><path d="M0.3 0.3 L7.7 0.3 L4 4.6 Z" fill="#fff"/></svg></i></div>
<div id="thead"></div>
<div class="bg" style="left:0;width:55px;background:#4b4b4b"></div><div class="bg" style="left:55px;width:258.2px;background:#000"></div><div class="bg" style="left:313.2px;width:172.2px;background:#4c4c4c"></div><div class="bg" style="left:485.4px;width:160px;background:#000"></div><div style="position:absolute;left:0;top:201px;width:640px;height:7px;background:linear-gradient(rgba(0,0,0,0.28),rgba(0,0,0,0))"></div>
<div class="h" style="left:-40.00px;top:149.40px;width:51.25px;height:51.40px;line-height:51.40px;font-size:11px"><span style="position:relative;left:4px">Trần</span></div>
<div class="h" style="left:11.25px;top:149.40px;width:43.75px;height:51.40px;line-height:51.40px;font-size:11px"><span style="position:relative;left:0px">Sàn</span></div>
<div class="h" style="left:55.00px;background:#242424;top:149.40px;width:258.20px;height:24.50px;line-height:24.50px;font-size:10.3px"><span style="position:relative;left:0px">Bên mua</span></div>
<div class="h" style="left:313.20px;top:149.40px;width:172.20px;height:24.50px;line-height:24.50px;font-size:10.1px"><span style="position:relative;left:0px">Khớp lệnh</span></div>
<div class="h" style="left:485.40px;background:#242424;top:149.40px;width:258.60px;height:24.50px;line-height:24.50px;font-size:10.3px"><span style="position:relative;left:0px">Bên bán</span></div>
<div class="h r2" style="left:55.00px;background:#242424;top:173.90px;width:43.20px;height:26.90px;line-height:26.90px;font-size:10.4px"><span style="position:relative;left:0px">Giá 3</span></div>
<div class="h r2" style="left:98.20px;background:#242424;top:173.90px;width:42.80px;height:26.90px;line-height:26.90px;font-size:10.4px"><span style="position:relative;left:0px">KL 3</span></div>
<div class="h r2" style="left:141.00px;background:#242424;top:173.90px;width:43.20px;height:26.90px;line-height:26.90px;font-size:10.4px"><span style="position:relative;left:0px">Giá 2</span></div>
<div class="h r2" style="left:184.20px;background:#242424;top:173.90px;width:43.20px;height:26.90px;line-height:26.90px;font-size:10.4px"><span style="position:relative;left:0px">KL 2</span></div>
<div class="h r2" style="left:227.40px;background:#242424;top:173.90px;width:42.80px;height:26.90px;line-height:26.90px;font-size:10.4px"><span style="position:relative;left:0px">Giá 1</span></div>
<div class="h r2" style="left:270.20px;background:#242424;top:173.90px;width:43.00px;height:26.90px;line-height:26.90px;font-size:10.4px"><span style="position:relative;left:0px">KL 1</span></div>
<div class="h r2" style="left:313.20px;top:173.90px;width:43.50px;height:26.90px;line-height:26.90px;font-size:10.4px"><span style="position:relative;left:0px">Giá</span></div>
<div class="h r2" style="left:356.70px;top:173.90px;width:42.90px;height:26.90px;line-height:26.90px;font-size:10.4px"><span style="position:relative;left:0px">KL</span></div>
<div class="h r2" style="left:399.60px;top:173.90px;width:43.00px;height:26.90px;line-height:26.90px;font-size:10.4px"><span style="position:relative;left:0px"><u>+/-</u></span></div>
<div class="h r2" style="left:442.60px;top:173.90px;width:42.80px;height:26.90px;line-height:26.90px;font-size:10.4px"><span style="position:relative;left:0px">%</span></div>
<div class="h r2" style="left:485.40px;background:#242424;top:173.90px;width:43.60px;height:26.90px;line-height:26.90px;font-size:10.4px"><span style="position:relative;left:0px">Giá 1</span></div>
<div class="h r2" style="left:529.00px;background:#242424;top:173.90px;width:43.40px;height:26.90px;line-height:26.90px;font-size:10.4px"><span style="position:relative;left:0px">KL 1</span></div>
<div class="h r2" style="left:572.40px;background:#242424;top:173.90px;width:42.90px;height:26.90px;line-height:26.90px;font-size:10.4px"><span style="position:relative;left:0px">Giá 2</span></div>
<div class="h r2" style="left:615.30px;background:#242424;top:173.90px;width:43.10px;height:26.90px;line-height:26.90px;font-size:10.4px"><span style="position:relative;left:0px">KL 2</span></div>
<div class="c g" style="left:-40.00px;top:200.00px;width:51.25px;height:26px;color:#ff38e0"><span style="right:3.2px">26.<b>1</b>5</span></div>
<div class="c g" style="left:11.25px;top:200.00px;width:43.75px;height:26px;color:#33f4fc"><span style="right:4.2px">22.75</span></div>
<div class="c k" style="left:55.00px;top:200.00px;width:43.20px;height:26px;color:#ffd817"><span style="right:2.4px">24.45</span></div>
<div class="c k" style="left:98.20px;top:200.00px;width:42.80px;height:26px;color:#ffd817"><span style="right:2.4px"><b>1</b>34,50</span></div>
<div class="c k" style="left:141.00px;top:200.00px;width:43.20px;height:26px;color:#22ff22"><span style="right:2.4px">24.50</span></div>
<div class="c k" style="left:184.20px;top:200.00px;width:43.20px;height:26px;color:#22ff22"><span style="right:2.4px">6<b>1</b>,<b>1</b>0</span></div>
<div class="c k" style="left:227.40px;top:200.00px;width:42.80px;height:26px;color:#22ff22"><span style="right:2.4px">24.55</span></div>
<div class="c k" style="left:270.20px;top:200.00px;width:43.00px;height:26px;color:#22ff22"><span style="right:2.4px">326,40</span></div>
<div class="c m" style="left:313.20px;top:200.00px;width:43.50px;height:26px;color:#22ff22"><span style="right:4.0px">24.55</span></div>
<div class="c e m" style="left:356.70px;top:200.00px;width:42.90px;height:26px;color:#22ff22"><span style="left:0.6px;transform:scaleX(0.955);transform-origin:0 50%"><b>1</b>,29<b>1</b>,<i>...</i></span></div>
<div class="c m" style="left:399.60px;top:200.00px;width:43.00px;height:26px;color:#22ff22"><span style="right:4.0px">+0.<b>1</b>0</span></div>
<div class="c m" style="left:442.60px;top:200.00px;width:42.80px;height:26px;color:#22ff22"><span style="right:3.3px">+0.4<s>%</s></span></div>
<div class="c k" style="left:485.40px;top:200.00px;width:43.60px;height:26px;color:#22ff22"><span style="right:2.3px">24.60</span></div>
<div class="c k" style="left:529.00px;top:200.00px;width:43.40px;height:26px;color:#22ff22"><span style="right:2.3px">269,<b>1</b>0</span></div>
<div class="c k" style="left:572.40px;top:200.00px;width:42.90px;height:26px;color:#22ff22"><span style="right:2.3px">24.65</span></div>
<div class="c k" style="left:615.30px;top:200.00px;width:26.70px;height:26px;color:#22ff22"><span style="left:7.45px">2<b>1</b>2,40</span></div>
<div class="c g" style="left:-40.00px;top:226.00px;width:51.25px;height:26px;color:#ff38e0"><span style="right:3.2px">5<b>1</b>.80</span></div>
<div class="c g" style="left:11.25px;top:226.00px;width:43.75px;height:26px;color:#33f4fc"><span style="right:4.2px">45.<b>1</b>0</span></div>
<div class="c k" style="left:55.00px;top:226.00px;width:43.20px;height:26px;color:#ff1c1c"><span style="right:2.4px">47.70</span></div>
<div class="c k" style="left:98.20px;top:226.00px;width:42.80px;height:26px;color:#ff1c1c"><span style="right:2.4px">29,00</span></div>
<div class="c k" style="left:141.00px;top:226.00px;width:43.20px;height:26px;color:#ff1c1c"><span style="right:2.4px">47.75</span></div>
<div class="c k" style="left:184.20px;top:226.00px;width:43.20px;height:26px;color:#ff1c1c"><span style="right:2.4px"><b>1</b>39,00</span></div>
<div class="c k" style="left:227.40px;top:226.00px;width:42.80px;height:26px;color:#ff1c1c"><span style="right:2.4px">47.80</span></div>
<div class="c k" style="left:270.20px;top:226.00px;width:43.00px;height:26px;color:#ff1c1c"><span style="right:2.4px"><b>1</b>7,30</span></div>
<div class="c m" style="left:313.20px;top:226.00px;width:43.50px;height:26px;color:#ff1c1c"><span style="right:4.0px">47.90</span></div>
<div class="c m" style="left:356.70px;top:226.00px;width:42.90px;height:26px;color:#ff1c1c"><span style="right:4.0px">396,80</span></div>
<div class="c m" style="left:399.60px;top:226.00px;width:43.00px;height:26px;color:#ff1c1c"><span style="right:4.0px">-0.55</span></div>
<div class="c m" style="left:442.60px;top:226.00px;width:42.80px;height:26px;color:#ff1c1c"><span style="right:3.3px">-<b>1</b>.<b>1</b><s>%</s></span></div>
<div class="c k" style="left:485.40px;top:226.00px;width:43.60px;height:26px;color:#ff1c1c"><span style="right:2.3px">47.90</span></div>
<div class="c k" style="left:529.00px;top:226.00px;width:43.40px;height:26px;color:#ff1c1c"><span style="right:2.3px">2,00</span></div>
<div class="c k" style="left:572.40px;top:226.00px;width:42.90px;height:26px;color:#ff1c1c"><span style="right:2.3px">47.95</span></div>
<div class="c k" style="left:615.30px;top:226.00px;width:26.70px;height:26px;color:#ff1c1c"><span style="left:17.95px">9,50</span></div>
<div class="c g" style="left:-40.00px;top:252.00px;width:51.25px;height:26px;color:#ff38e0"><span style="right:3.2px">4<b>1</b>.<b>1</b>5</span></div>
<div class="c g" style="left:11.25px;top:252.00px;width:43.75px;height:26px;color:#33f4fc"><span style="right:4.2px">35.85</span></div>
<div class="c k" style="left:55.00px;top:252.00px;width:43.20px;height:26px;color:#ff1c1c"><span style="right:2.4px">38.<b>1</b>5</span></div>
<div class="c k" style="left:98.20px;top:252.00px;width:42.80px;height:26px;color:#ff1c1c"><span style="right:2.4px"><b>1</b>73,50</span></div>
<div class="c k" style="left:141.00px;top:252.00px;width:43.20px;height:26px;color:#ff1c1c"><span style="right:2.4px">38.20</span></div>
<div class="c k" style="left:184.20px;top:252.00px;width:43.20px;height:26px;color:#ff1c1c"><span style="right:2.4px"><b>1</b>,40</span></div>
<div class="c k" style="left:227.40px;top:252.00px;width:42.80px;height:26px;color:#ff1c1c"><span style="right:2.4px">38.25</span></div>
<div class="c k" style="left:270.20px;top:252.00px;width:43.00px;height:26px;color:#ff1c1c"><span style="right:2.4px">9<b>1</b>,50</span></div>
<div class="c m" style="left:313.20px;top:252.00px;width:43.50px;height:26px;color:#ff1c1c"><span style="right:4.0px">38.25</span></div>
<div class="c m" style="left:356.70px;top:252.00px;width:42.90px;height:26px;color:#ff1c1c"><span style="right:4.0px;transform:scaleX(0.947);transform-origin:100% 50%"><b>1</b>,0<b>1</b><b>1</b>,80</span></div>
<div class="c m" style="left:399.60px;top:252.00px;width:43.00px;height:26px;color:#ff1c1c"><span style="right:4.0px">-0.25</span></div>
<div class="c m" style="left:442.60px;top:252.00px;width:42.80px;height:26px;color:#ff1c1c"><span style="right:3.3px">-0.6<s>%</s></span></div>
<div class="c k" style="left:485.40px;top:252.00px;width:43.60px;height:26px;color:#ff1c1c"><span style="right:2.3px">38.30</span></div>
<div class="c k" style="left:529.00px;top:252.00px;width:43.40px;height:26px;color:#ff1c1c"><span style="right:2.3px">56,20</span></div>
<div class="c k" style="left:572.40px;top:252.00px;width:42.90px;height:26px;color:#ff1c1c"><span style="right:2.3px">38.35</span></div>
<div class="c k" style="left:615.30px;top:252.00px;width:26.70px;height:26px;color:#ff1c1c"><span style="left:8.25px"><b>1</b>56,30</span></div>
<div class="c g" style="left:-40.00px;top:279.00px;width:51.25px;height:26px;color:#ff38e0"><span style="right:3.2px">78.70</span></div>
<div class="c g" style="left:11.25px;top:279.00px;width:43.75px;height:26px;color:#33f4fc"><span style="right:4.2px">68.50</span></div>
<div class="c k" style="left:55.00px;top:279.00px;width:43.20px;height:26px;color:#ffd817"><span style="right:2.4px">73.60</span></div>
<div class="c k" style="left:98.20px;top:279.00px;width:42.80px;height:26px;color:#ffd817"><span style="right:2.4px">8<b>1</b>,20</span></div>
<div class="c k" style="left:141.00px;top:279.00px;width:43.20px;height:26px;color:#22ff22"><span style="right:2.4px">73.70</span></div>
<div class="c k" style="left:184.20px;top:279.00px;width:43.20px;height:26px;color:#22ff22"><span style="right:2.4px">9,30</span></div>
<div class="c k" style="left:227.40px;top:279.00px;width:42.80px;height:26px;color:#22ff22"><span style="right:2.4px">73.80</span></div>
<div class="c k" style="left:270.20px;top:279.00px;width:43.00px;height:26px;color:#22ff22"><span style="right:2.4px">24,80</span></div>
<div class="c m" style="left:313.20px;top:279.00px;width:43.50px;height:26px;color:#22ff22"><span style="right:4.0px">73.80</span></div>
<div class="c m" style="left:356.70px;top:279.00px;width:42.90px;height:26px;color:#22ff22"><span style="right:4.0px"><b>1</b><b>1</b>3,50</span></div>
<div class="c m" style="left:399.60px;top:279.00px;width:43.00px;height:26px;color:#22ff22"><span style="right:4.0px">+0.20</span></div>
<div class="c m" style="left:442.60px;top:279.00px;width:42.80px;height:26px;color:#22ff22"><span style="right:3.3px">+0.3<s>%</s></span></div>
<div class="c k" style="left:485.40px;top:279.00px;width:43.60px;height:26px;color:#22ff22"><span style="right:2.3px">73.90</span></div>
<div class="c k" style="left:529.00px;top:279.00px;width:43.40px;height:26px;color:#22ff22"><span style="right:2.3px">5,20</span></div>
<div class="c k" style="left:572.40px;top:279.00px;width:42.90px;height:26px;color:#22ff22"><span style="right:2.3px">74.00</span></div>
<div class="c k" style="left:615.30px;top:279.00px;width:26.70px;height:26px;color:#22ff22"><span style="left:11.65px">43,60</span></div>
<div class="c g" style="left:-40.00px;top:305.00px;width:51.25px;height:26px;color:#ff38e0"><span style="right:3.2px">96.80</span></div>
<div class="c g" style="left:11.25px;top:305.00px;width:43.75px;height:26px;color:#33f4fc"><span style="right:4.2px">84.20</span></div>
<div class="c k" style="left:55.00px;top:305.00px;width:43.20px;height:26px;color:#22ff22"><span style="right:2.4px">92.60</span></div>
<div class="c k" style="left:98.20px;top:305.00px;width:42.80px;height:26px;color:#22ff22"><span style="right:2.4px"><b>1</b><b>1</b>,60</span></div>
<div class="c k" style="left:141.00px;top:305.00px;width:43.20px;height:26px;color:#22ff22"><span style="right:2.4px">92.70</span></div>
<div class="c k" style="left:184.20px;top:305.00px;width:43.20px;height:26px;color:#22ff22"><span style="right:2.4px">38,70</span></div>
<div class="c k" style="left:227.40px;top:305.00px;width:42.80px;height:26px;color:#22ff22"><span style="right:2.4px">92.80</span></div>
<div class="c k" style="left:270.20px;top:305.00px;width:43.00px;height:26px;color:#22ff22"><span style="right:2.4px">4,30</span></div>
<div class="c m" style="left:313.20px;top:305.00px;width:43.50px;height:26px;color:#22ff22"><span style="right:4.0px">92.90</span></div>
<div class="c m" style="left:356.70px;top:305.00px;width:42.90px;height:26px;color:#22ff22"><span style="right:4.0px;transform:scaleX(0.947);transform-origin:100% 50%"><b>1</b>,<b>1</b><b>1</b>7,90</span></div>
<div class="c m" style="left:399.60px;top:305.00px;width:43.00px;height:26px;color:#22ff22"><span style="right:4.0px">+2.40</span></div>
<div class="c m" style="left:442.60px;top:305.00px;width:42.80px;height:26px;color:#22ff22"><span style="right:3.3px">+2.7<s>%</s></span></div>
<div class="c k" style="left:485.40px;top:305.00px;width:43.60px;height:26px;color:#22ff22"><span style="right:2.3px">92.90</span></div>
<div class="c k" style="left:529.00px;top:305.00px;width:43.40px;height:26px;color:#22ff22"><span style="right:2.3px">247,20</span></div>
<div class="c k" style="left:572.40px;top:305.00px;width:42.90px;height:26px;color:#22ff22"><span style="right:2.3px">93.00</span></div>
<div class="c k" style="left:615.30px;top:305.00px;width:26.70px;height:26px;color:#22ff22"><span style="left:5.35px">626,<b>1</b>0</span></div>
<div class="c g" style="left:-40.00px;top:331.00px;width:51.25px;height:26px;color:#ff38e0"><span style="right:3.2px"><b>1</b><b>1</b>3.40</span></div>
<div class="c g" style="left:11.25px;top:331.00px;width:43.75px;height:26px;color:#33f4fc"><span style="right:4.2px">98.60</span></div>
<div class="c k" style="left:55.00px;top:331.00px;width:43.20px;height:26px;color:#22ff22"><span style="right:2.4px"><b>1</b>07.50</span></div>
<div class="c k" style="left:98.20px;top:331.00px;width:42.80px;height:26px;color:#22ff22"><span style="right:2.4px">8,90</span></div>
<div class="c k" style="left:141.00px;top:331.00px;width:43.20px;height:26px;color:#22ff22"><span style="right:2.4px"><b>1</b>07.60</span></div>
<div class="c k" style="left:184.20px;top:331.00px;width:43.20px;height:26px;color:#22ff22"><span style="right:2.4px"><b>1</b>0</span></div>
<div class="c k" style="left:227.40px;top:331.00px;width:42.80px;height:26px;color:#22ff22"><span style="right:2.4px"><b>1</b>07.80</span></div>
<div class="c k" style="left:270.20px;top:331.00px;width:43.00px;height:26px;color:#22ff22"><span style="right:2.4px"><b>1</b>,30</span></div>
<div class="c m" style="left:313.20px;top:331.00px;width:43.50px;height:26px;color:#22ff22"><span style="right:4.0px"><b>1</b>07.90</span></div>
<div class="c m" style="left:356.70px;top:331.00px;width:42.90px;height:26px;color:#22ff22"><span style="right:4.0px"><b>1</b>20,70</span></div>
<div class="c m" style="left:399.60px;top:331.00px;width:43.00px;height:26px;color:#22ff22"><span style="right:4.0px">+<b>1</b>.90</span></div>
<div class="c m" style="left:442.60px;top:331.00px;width:42.80px;height:26px;color:#22ff22"><span style="right:3.3px">+<b>1</b>.8<s>%</s></span></div>
<div class="c k" style="left:485.40px;top:331.00px;width:43.60px;height:26px;color:#22ff22"><span style="right:2.3px"><b>1</b>07.90</span></div>
<div class="c k" style="left:529.00px;top:331.00px;width:43.40px;height:26px;color:#22ff22"><span style="right:2.3px">70</span></div>
<div class="c k" style="left:572.40px;top:331.00px;width:42.90px;height:26px;color:#22ff22"><span style="right:2.3px"><b>1</b>08.00</span></div>
<div class="c k" style="left:615.30px;top:331.00px;width:26.70px;height:26px;color:#22ff22"><span style="left:11.95px">56,80</span></div>
<div class="c g" style="left:-40.00px;top:357.00px;width:51.25px;height:26px;color:#ff38e0"><span style="right:3.2px">43.65</span></div>
<div class="c g" style="left:11.25px;top:357.00px;width:43.75px;height:26px;color:#33f4fc"><span style="right:4.2px">37.95</span></div>
<div class="c k" style="left:55.00px;top:357.00px;width:43.20px;height:26px;color:#ff1c1c"><span style="right:2.4px">39.90</span></div>
<div class="c k" style="left:98.20px;top:357.00px;width:42.80px;height:26px;color:#ff1c1c"><span style="right:2.4px">30,20</span></div>
<div class="c k" style="left:141.00px;top:357.00px;width:43.20px;height:26px;color:#ff1c1c"><span style="right:2.4px">39.95</span></div>
<div class="c k" style="left:184.20px;top:357.00px;width:43.20px;height:26px;color:#ff1c1c"><span style="right:2.4px">8,30</span></div>
<div class="c k" style="left:227.40px;top:357.00px;width:42.80px;height:26px;color:#ff1c1c"><span style="right:2.4px">40.00</span></div>
<div class="c k" style="left:270.20px;top:357.00px;width:43.00px;height:26px;color:#ff1c1c"><span style="right:2.4px">268,60</span></div>
<div class="c m" style="left:313.20px;top:357.00px;width:43.50px;height:26px;color:#ff1c1c"><span style="right:4.0px">40.00</span></div>
<div class="c m" style="left:356.70px;top:357.00px;width:42.90px;height:26px;color:#ff1c1c"><span style="right:4.0px">379,50</span></div>
<div class="c m" style="left:399.60px;top:357.00px;width:43.00px;height:26px;color:#ff1c1c"><span style="right:4.0px">-0.80</span></div>
<div class="c m" style="left:442.60px;top:357.00px;width:42.80px;height:26px;color:#ff1c1c"><span style="right:3.3px">-2.0<s>%</s></span></div>
<div class="c k" style="left:485.40px;top:357.00px;width:43.60px;height:26px;color:#ff1c1c"><span style="right:2.3px">40.<b>1</b>0</span></div>
<div class="c k" style="left:529.00px;top:357.00px;width:43.40px;height:26px;color:#ff1c1c"><span style="right:2.3px"><b>1</b>0,20</span></div>
<div class="c k" style="left:572.40px;top:357.00px;width:42.90px;height:26px;color:#ff1c1c"><span style="right:2.3px">40.20</span></div>
<div class="c k" style="left:615.30px;top:357.00px;width:26.70px;height:26px"></div>
<div class="c g" style="left:-40.00px;top:383.00px;width:51.25px;height:26px;color:#ff38e0"><span style="right:3.2px">30.35</span></div>
<div class="c g" style="left:11.25px;top:383.00px;width:43.75px;height:26px;color:#33f4fc"><span style="right:4.2px">26.45</span></div>
<div class="c k" style="left:55.00px;top:383.00px;width:43.20px;height:26px;color:#ff1c1c"><span style="right:2.4px">27.85</span></div>
<div class="c k" style="left:98.20px;top:383.00px;width:42.80px;height:26px;color:#ff1c1c"><span style="right:2.4px">344,<b>1</b>0</span></div>
<div class="c k" style="left:141.00px;top:383.00px;width:43.20px;height:26px;color:#ff1c1c"><span style="right:2.4px">27.90</span></div>
<div class="c k" style="left:184.20px;top:383.00px;width:43.20px;height:26px;color:#ff1c1c"><span style="right:2.4px">402,30</span></div>
<div class="c k" style="left:227.40px;top:383.00px;width:42.80px;height:26px;color:#ff1c1c"><span style="right:2.4px">27.95</span></div>
<div class="c k" style="left:270.20px;top:383.00px;width:43.00px;height:26px;color:#ff1c1c"><span style="right:2.4px">280,50</span></div>
<div class="c m" style="left:313.20px;top:383.00px;width:43.50px;height:26px;color:#ff1c1c"><span style="right:4.0px">27.95</span></div>
<div class="c e m" style="left:356.70px;top:383.00px;width:42.90px;height:26px;color:#ff1c1c"><span style="left:0.6px;transform:scaleX(0.955);transform-origin:0 50%"><b>1</b>,268,<i>...</i></span></div>
<div class="c m" style="left:399.60px;top:383.00px;width:43.00px;height:26px;color:#ff1c1c"><span style="right:4.0px">-0.45</span></div>
<div class="c m" style="left:442.60px;top:383.00px;width:42.80px;height:26px;color:#ff1c1c"><span style="right:3.3px">-<b>1</b>.6<s>%</s></span></div>
<div class="c k" style="left:485.40px;top:383.00px;width:43.60px;height:26px;color:#ff1c1c"><span style="right:2.3px">28.00</span></div>
<div class="c k" style="left:529.00px;top:383.00px;width:43.40px;height:26px;color:#ff1c1c"><span style="right:2.3px">85,<b>1</b>0</span></div>
<div class="c k" style="left:572.40px;top:383.00px;width:42.90px;height:26px;color:#ff1c1c"><span style="right:2.3px">28.05</span></div>
<div class="c k" style="left:615.30px;top:383.00px;width:26.70px;height:26px;color:#ff1c1c"><span style="left:14.45px"><b>1</b>05,30</span></div>
<div class="c g" style="left:-40.00px;top:409.00px;width:51.25px;height:26px;color:#ff38e0"><span style="right:3.2px">3<b>1</b>.45</span></div>
<div class="c g" style="left:11.25px;top:409.00px;width:43.75px;height:26px;color:#33f4fc"><span style="right:4.2px">27.35</span></div>
<div class="c k" style="left:55.00px;top:409.00px;width:43.20px;height:26px;color:#ff1c1c"><span style="right:2.4px">28.70</span></div>
<div class="c e k" style="left:98.20px;top:409.00px;width:42.80px;height:26px;color:#ff1c1c"><span style="left:0.6px;transform:scaleX(0.955);transform-origin:0 50%"><b>1</b>,093,<i>...</i></span></div>
<div class="c k" style="left:141.00px;top:409.00px;width:43.20px;height:26px;color:#ff1c1c"><span style="right:2.4px">28.75</span></div>
<div class="c k" style="left:184.20px;top:409.00px;width:43.20px;height:26px;color:#ff1c1c"><span style="right:2.4px;transform:scaleX(0.947);transform-origin:100% 50%"><b>1</b>,<b>1</b>69,00</span></div>
<div class="c k" style="left:227.40px;top:409.00px;width:42.80px;height:26px;color:#ff1c1c"><span style="right:2.4px">28.80</span></div>
<div class="c k" style="left:270.20px;top:409.00px;width:43.00px;height:26px;color:#ff1c1c"><span style="right:2.4px">800,60</span></div>
<div class="c m" style="left:313.20px;top:409.00px;width:43.50px;height:26px;color:#ff1c1c"><span style="right:4.0px">28.80</span></div>
<div class="c e m" style="left:356.70px;top:409.00px;width:42.90px;height:26px;color:#ff1c1c"><span style="left:0.6px;transform:scaleX(0.955);transform-origin:0 50%">5,893,<i>...</i></span></div>
<div class="c m" style="left:399.60px;top:409.00px;width:43.00px;height:26px;color:#ff1c1c"><span style="right:4.0px">-0.60</span></div>
<div class="c m" style="left:442.60px;top:409.00px;width:42.80px;height:26px;color:#ff1c1c"><span style="right:3.3px">-2.0<s>%</s></span></div>
<div class="c k" style="left:485.40px;top:409.00px;width:43.60px;height:26px;color:#ff1c1c"><span style="right:2.3px">28.85</span></div>
<div class="c k" style="left:529.00px;top:409.00px;width:43.40px;height:26px;color:#ff1c1c"><span style="right:2.3px">97,30</span></div>
<div class="c k" style="left:572.40px;top:409.00px;width:42.90px;height:26px;color:#ff1c1c"><span style="right:2.3px">28.90</span></div>
<div class="c k" style="left:615.30px;top:409.00px;width:26.70px;height:26px;color:#ff1c1c"><span style="left:21.15px">8,40</span></div>
<div class="c g" style="left:-40.00px;top:435.00px;width:51.25px;height:26px;color:#ff38e0"><span style="right:3.2px">46.<b>1</b>5</span></div>
<div class="c g" style="left:11.25px;top:435.00px;width:43.75px;height:26px;color:#33f4fc"><span style="right:4.2px">40.<b>1</b>5</span></div>
<div class="c k" style="left:55.00px;top:435.00px;width:43.20px;height:26px;color:#ff1c1c"><span style="right:2.4px">42.95</span></div>
<div class="c k" style="left:98.20px;top:435.00px;width:42.80px;height:26px;color:#ff1c1c"><span style="right:2.4px">2,20</span></div>
<div class="c k" style="left:141.00px;top:435.00px;width:43.20px;height:26px;color:#ff1c1c"><span style="right:2.4px">43.00</span></div>
<div class="c k" style="left:184.20px;top:435.00px;width:43.20px;height:26px;color:#ff1c1c"><span style="right:2.4px">20,40</span></div>
<div class="c k" style="left:227.40px;top:435.00px;width:42.80px;height:26px;color:#ff1c1c"><span style="right:2.4px">43.05</span></div>
<div class="c k" style="left:270.20px;top:435.00px;width:43.00px;height:26px;color:#ff1c1c"><span style="right:2.4px">7,20</span></div>
<div class="c m" style="left:313.20px;top:435.00px;width:43.50px;height:26px;color:#ff1c1c"><span style="right:4.0px">43.05</span></div>
<div class="c m" style="left:356.70px;top:435.00px;width:42.90px;height:26px;color:#ff1c1c"><span style="right:4.0px">85,80</span></div>
<div class="c m" style="left:399.60px;top:435.00px;width:43.00px;height:26px;color:#ff1c1c"><span style="right:4.0px">-0.<b>1</b>0</span></div>
<div class="c m" style="left:442.60px;top:435.00px;width:42.80px;height:26px;color:#ff1c1c"><span style="right:3.3px">-0.2<s>%</s></span></div>
<div class="c k" style="left:485.40px;top:435.00px;width:43.60px;height:26px;color:#ff1c1c"><span style="right:2.3px">43.<b>1</b>0</span></div>
<div class="c k" style="left:529.00px;top:435.00px;width:43.40px;height:26px;color:#ff1c1c"><span style="right:2.3px"><b>1</b>5,70</span></div>
<div class="c k" style="left:572.40px;top:435.00px;width:42.90px;height:26px;color:#ffd817"><span style="right:2.3px">43.<b>1</b>5</span></div>
<div class="c k" style="left:615.30px;top:435.00px;width:26.70px;height:26px;color:#ffd817"><span style="left:11.90px">29,50</span></div>
<div class="c g" style="left:-40.00px;top:461.00px;width:51.25px;height:26px;color:#ff38e0"><span style="right:3.2px">30.80</span></div>
<div class="c g" style="left:11.25px;top:461.00px;width:43.75px;height:26px;color:#33f4fc"><span style="right:4.2px">26.80</span></div>
<div class="c k" style="left:55.00px;top:461.00px;width:43.20px;height:26px;color:#ff1c1c"><span style="right:2.4px">28.40</span></div>
<div class="c k" style="left:98.20px;top:461.00px;width:42.80px;height:26px;color:#ff1c1c"><span style="right:2.4px">709,60</span></div>
<div class="c k" style="left:141.00px;top:461.00px;width:43.20px;height:26px;color:#ff1c1c"><span style="right:2.4px">28.45</span></div>
<div class="c k" style="left:184.20px;top:461.00px;width:43.20px;height:26px;color:#ff1c1c"><span style="right:2.4px"><b>1</b>5<b>1</b>,40</span></div>
<div class="c k" style="left:227.40px;top:461.00px;width:42.80px;height:26px;color:#ff1c1c"><span style="right:2.4px">28.50</span></div>
<div class="c k" style="left:270.20px;top:461.00px;width:43.00px;height:26px;color:#ff1c1c"><span style="right:2.4px">6<b>1</b>4,50</span></div>
<div class="c m" style="left:313.20px;top:461.00px;width:43.50px;height:26px;color:#ff1c1c"><span style="right:4.0px">28.50</span></div>
<div class="c e m" style="left:356.70px;top:461.00px;width:42.90px;height:26px;color:#ff1c1c"><span style="left:0.6px;transform:scaleX(0.955);transform-origin:0 50%">2,232,<i>...</i></span></div>
<div class="c m" style="left:399.60px;top:461.00px;width:43.00px;height:26px;color:#ff1c1c"><span style="right:4.0px">-0.30</span></div>
<div class="c m" style="left:442.60px;top:461.00px;width:42.80px;height:26px;color:#ff1c1c"><span style="right:3.3px">-<b>1</b>.0<s>%</s></span></div>
<div class="c k" style="left:485.40px;top:461.00px;width:43.60px;height:26px;color:#ff1c1c"><span style="right:2.3px">28.55</span></div>
<div class="c k" style="left:529.00px;top:461.00px;width:43.40px;height:26px;color:#ff1c1c"><span style="right:2.3px">57,50</span></div>
<div class="c k" style="left:572.40px;top:461.00px;width:42.90px;height:26px;color:#ff1c1c"><span style="right:2.3px">28.60</span></div>
<div class="c k" style="left:615.30px;top:461.00px;width:26.70px;height:26px;color:#ff1c1c"><span style="left:10.05px"><b>1</b><b>1</b>3,20</span></div>
<svg width="640" height="480" viewBox="0 0 640 480" style="position:absolute;left:0;top:0;pointer-events:none">
<rect x="0" y="148.90" width="640" height="1" fill="#454545"/>
<rect x="55.00" y="173.40" width="600" height="1" fill="#373737"/>
<rect x="0" y="199.00" width="640" height="2" fill="#3a3a3a"/>
<rect x="0.00" y="226.84" width="55.00" height="1" fill="#414141"/>
<rect x="55.00" y="226.84" width="258.20" height="1" fill="#343434"/>
<rect x="313.20" y="226.84" width="172.20" height="1" fill="#424242"/>
<rect x="485.40" y="226.84" width="154.60" height="1" fill="#343434"/>
<rect x="0.00" y="252.88" width="55.00" height="1" fill="#414141"/>
<rect x="55.00" y="252.88" width="258.20" height="1" fill="#343434"/>
<rect x="313.20" y="252.88" width="172.20" height="1" fill="#424242"/>
<rect x="485.40" y="252.88" width="154.60" height="1" fill="#343434"/>
<rect x="0.00" y="278.92" width="55.00" height="1" fill="#414141"/>
<rect x="55.00" y="278.92" width="258.20" height="1" fill="#343434"/>
<rect x="313.20" y="278.92" width="172.20" height="1" fill="#424242"/>
<rect x="485.40" y="278.92" width="154.60" height="1" fill="#343434"/>
<rect x="0.00" y="304.96" width="55.00" height="1" fill="#414141"/>
<rect x="55.00" y="304.96" width="258.20" height="1" fill="#343434"/>
<rect x="313.20" y="304.96" width="172.20" height="1" fill="#424242"/>
<rect x="485.40" y="304.96" width="154.60" height="1" fill="#343434"/>
<rect x="0.00" y="331.00" width="55.00" height="1" fill="#414141"/>
<rect x="55.00" y="331.00" width="258.20" height="1" fill="#343434"/>
<rect x="313.20" y="331.00" width="172.20" height="1" fill="#424242"/>
<rect x="485.40" y="331.00" width="154.60" height="1" fill="#343434"/>
<rect x="0.00" y="357.04" width="55.00" height="1" fill="#414141"/>
<rect x="55.00" y="357.04" width="258.20" height="1" fill="#343434"/>
<rect x="313.20" y="357.04" width="172.20" height="1" fill="#424242"/>
<rect x="485.40" y="357.04" width="154.60" height="1" fill="#343434"/>
<rect x="0.00" y="383.08" width="55.00" height="1" fill="#414141"/>
<rect x="55.00" y="383.08" width="258.20" height="1" fill="#343434"/>
<rect x="313.20" y="383.08" width="172.20" height="1" fill="#424242"/>
<rect x="485.40" y="383.08" width="154.60" height="1" fill="#343434"/>
<rect x="0.00" y="409.12" width="55.00" height="1" fill="#414141"/>
<rect x="55.00" y="409.12" width="258.20" height="1" fill="#343434"/>
<rect x="313.20" y="409.12" width="172.20" height="1" fill="#424242"/>
<rect x="485.40" y="409.12" width="154.60" height="1" fill="#343434"/>
<rect x="0.00" y="435.16" width="55.00" height="1" fill="#414141"/>
<rect x="55.00" y="435.16" width="258.20" height="1" fill="#343434"/>
<rect x="313.20" y="435.16" width="172.20" height="1" fill="#424242"/>
<rect x="485.40" y="435.16" width="154.60" height="1" fill="#343434"/>
<rect x="0.00" y="461.20" width="55.00" height="1" fill="#414141"/>
<rect x="55.00" y="461.20" width="258.20" height="1" fill="#343434"/>
<rect x="313.20" y="461.20" width="172.20" height="1" fill="#424242"/>
<rect x="485.40" y="461.20" width="154.60" height="1" fill="#343434"/>
<rect x="0.00" y="487.24" width="55.00" height="1" fill="#414141"/>
<rect x="55.00" y="487.24" width="258.20" height="1" fill="#343434"/>
<rect x="313.20" y="487.24" width="172.20" height="1" fill="#424242"/>
<rect x="485.40" y="487.24" width="154.60" height="1" fill="#343434"/>
<rect x="10.65" y="149.40" width="1" height="49.60" fill="#373737"/>
<rect x="10.65" y="201.00" width="1" height="279.00" fill="#3f3f3f"/>
<rect x="54.40" y="149.40" width="1" height="49.60" fill="#373737"/>
<rect x="54.40" y="201.00" width="1" height="279.00" fill="#3a3a3a"/>
<rect x="97.60" y="173.90" width="1" height="25.10" fill="#373737"/>
<rect x="97.60" y="201.00" width="1" height="279.00" fill="#343434"/>
<rect x="140.40" y="173.90" width="1" height="25.10" fill="#373737"/>
<rect x="140.40" y="201.00" width="1" height="279.00" fill="#343434"/>
<rect x="183.60" y="173.90" width="1" height="25.10" fill="#373737"/>
<rect x="183.60" y="201.00" width="1" height="279.00" fill="#343434"/>
<rect x="226.80" y="173.90" width="1" height="25.10" fill="#373737"/>
<rect x="226.80" y="201.00" width="1" height="279.00" fill="#343434"/>
<rect x="269.60" y="173.90" width="1" height="25.10" fill="#373737"/>
<rect x="269.60" y="201.00" width="1" height="279.00" fill="#343434"/>
<rect x="312.60" y="149.40" width="1" height="49.60" fill="#373737"/>
<rect x="312.60" y="201.00" width="1" height="279.00" fill="#3a3a3a"/>
<rect x="356.10" y="173.90" width="1" height="25.10" fill="#373737"/>
<rect x="356.10" y="201.00" width="1" height="279.00" fill="#424242"/>
<rect x="399.00" y="173.90" width="1" height="25.10" fill="#373737"/>
<rect x="399.00" y="201.00" width="1" height="279.00" fill="#424242"/>
<rect x="442.00" y="173.90" width="1" height="25.10" fill="#373737"/>
<rect x="442.00" y="201.00" width="1" height="279.00" fill="#424242"/>
<rect x="484.80" y="149.40" width="1" height="49.60" fill="#373737"/>
<rect x="484.80" y="201.00" width="1" height="279.00" fill="#3a3a3a"/>
<rect x="528.40" y="173.90" width="1" height="25.10" fill="#373737"/>
<rect x="528.40" y="201.00" width="1" height="279.00" fill="#343434"/>
<rect x="571.80" y="173.90" width="1" height="25.10" fill="#373737"/>
<rect x="571.80" y="201.00" width="1" height="279.00" fill="#343434"/>
<rect x="614.70" y="173.90" width="1" height="25.10" fill="#373737"/>
<rect x="614.70" y="201.00" width="1" height="279.00" fill="#343434"/>
</svg>
</div></div></body></html>
